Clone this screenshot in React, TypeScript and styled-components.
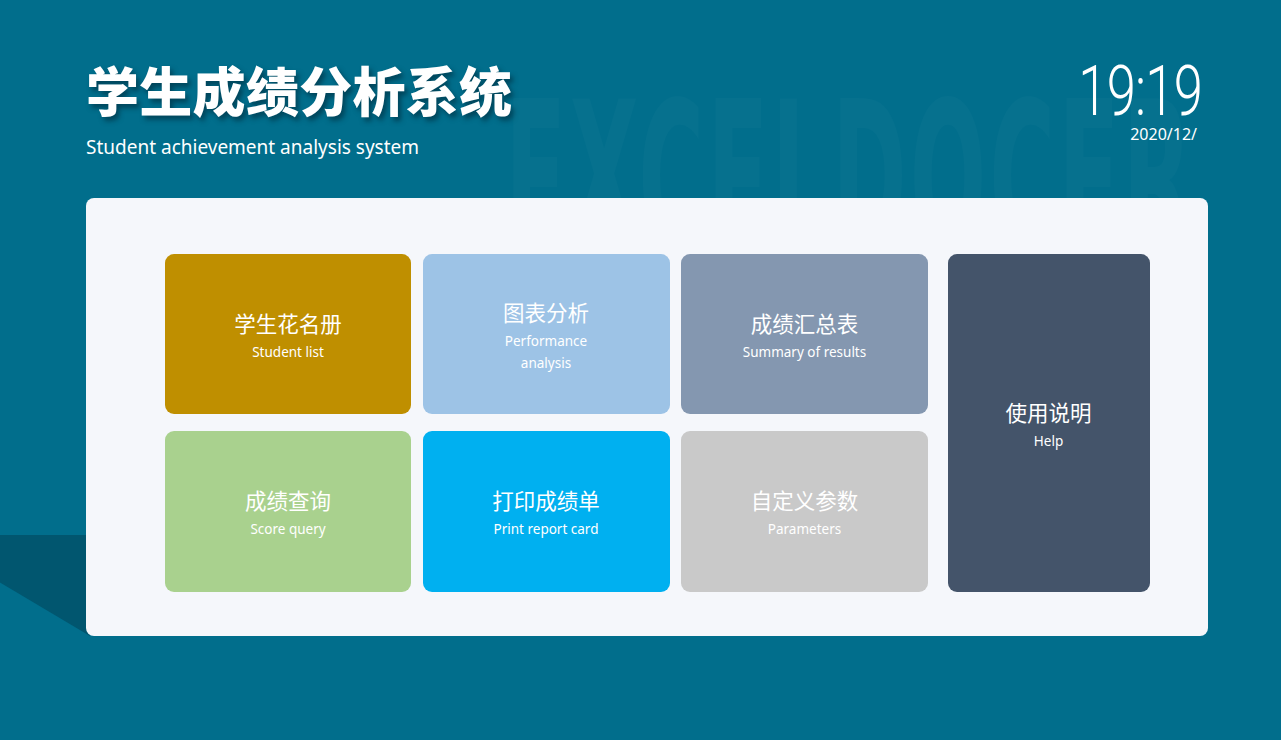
import React from "react";
import styled, { createGlobalStyle } from "styled-components";

const Global = createGlobalStyle`
  html, body { margin: 0; padding: 0; }
  body {
    background: #016e8c;
    width: 1281px;
    height: 740px;
    overflow: hidden;
    font-family: "Noto Sans", "Noto Sans CJK SC", sans-serif;
  }
`;

const Page = styled.div`
  position: relative;
  width: 1281px;
  height: 740px;
  padding: 0 81px 0 86px;
  box-sizing: border-box;
  overflow: hidden;
`;

const Watermark = styled.div`
  position: absolute;
  left: 505px;
  top: 76px;
  font-family: "DejaVu Sans", sans-serif;
  font-stretch: condensed;
  font-weight: 700;
  font-size: 100px;
  line-height: 1;
  letter-spacing: 3px;
  color: rgba(255, 255, 255, 0.022);
  transform: scale(1, 2.1);
  transform-origin: top left;
  white-space: nowrap;
  pointer-events: none;
`;

const PanelShadow = styled.div`
  position: absolute;
  left: 0;
  top: 535px;
  width: 90px;
  height: 101px;
  background: #01566f;
  clip-path: polygon(0 0, 100% 0, 100% 100%, 0 47%);
`;

const Header = styled.header`
  position: relative;
  display: flex;
  justify-content: space-between;
  align-items: flex-start;
  height: 198px;
`;

const TitleBlock = styled.div`
  padding-top: 55px;
`;

const Title = styled.h1`
  margin: 0;
  font-family: "Noto Sans CJK SC", sans-serif;
  font-weight: 900;
  font-size: 53px;
  line-height: 68px;
  color: #ffffff;
  letter-spacing: 0.3px;
  text-shadow: 3px 4px 5px rgba(0, 35, 50, 0.55);
`;

const Subtitle = styled.div`
  margin-top: 12px;
  font-family: "Noto Sans", sans-serif;
  font-size: 19px;
  line-height: 24px;
  color: #ffffff;
`;

const Clock = styled.div`
  padding-top: 54px;
  display: flex;
  flex-direction: column;
  align-items: flex-end;
  color: #ffffff;
`;

const Time = styled.div`
  font-family: "Roboto", sans-serif;
  font-weight: 300;
  font-size: 70px;
  line-height: 74px;
  letter-spacing: -1px;
  transform: scaleX(0.75);
  transform-origin: right center;
  margin-right: -2px;
`;

const DateText = styled.div`
  margin-top: -4px;
  margin-right: 3px;
  font-family: "Noto Sans", sans-serif;
  font-size: 16px;
  line-height: 20px;
`;

const Panel = styled.main`
  position: relative;
  width: 1122px;
  height: 438px;
  box-sizing: border-box;
  background: #f5f7fb;
  border-radius: 8px;
  padding: 56px 58px 44px 79px;
  display: grid;
  grid-template-columns: 246px 247px 247px 210px;
  grid-template-rows: 160px 161px;
  column-gap: 11.5px;
  row-gap: 17px;
`;

const Card = styled.div<{ $bg: string; $tall?: boolean }>`
  background: ${(p) => p.$bg};
  border-radius: 9px;
  display: flex;
  flex-direction: column;
  align-items: center;
  justify-content: center;
  padding-top: 3px;
  box-sizing: border-box;
  color: #ffffff;
  text-align: center;
  ${(p) => (p.$tall ? "grid-column: 4; grid-row: 1 / span 2; margin-left: 8px;" : "")}
`;

const CardTitle = styled.div`
  font-family: "Noto Sans CJK SC", sans-serif;
  font-weight: 400;
  font-size: 21.5px;
  line-height: 28px;
`;

const CardSub = styled.div<{ $maxW?: number }>`
  font-family: "Noto Sans", sans-serif;
  font-size: 13.5px;
  line-height: 22px;
  margin-top: 4px;
  max-width: ${(p) => (p.$maxW ? `${p.$maxW}px` : "none")};
`;

type Item = { zh: string; en: string; bg: string; tall?: boolean; maxW?: number };

const items: Item[] = [
  { zh: "学生花名册", en: "Student list", bg: "#bf8f00" },
  { zh: "图表分析", en: "Performance analysis", bg: "#9dc3e6", maxW: 100 },
  { zh: "成绩汇总表", en: "Summary of results", bg: "#8497b0" },
  { zh: "使用说明", en: "Help", bg: "#44546a", tall: true },
  { zh: "成绩查询", en: "Score query", bg: "#a9d18e" },
  { zh: "打印成绩单", en: "Print report card", bg: "#00b0f0" },
  { zh: "自定义参数", en: "Parameters", bg: "#c9c9c9" },
];

export default function App() {
  return (
    <Page>
      <Global />
      <Watermark>EXCELDOCER</Watermark>
      <PanelShadow />
      <Header>
        <TitleBlock>
          <Title>学生成绩分析系统</Title>
          <Subtitle>Student achievement analysis system</Subtitle>
        </TitleBlock>
        <Clock>
          <Time>19:19</Time>
          <DateText>2020/12/</DateText>
        </Clock>
      </Header>
      <Panel>
        {items.map((it) => (
          <Card key={it.zh} $bg={it.bg} $tall={it.tall}>
            <CardTitle>{it.zh}</CardTitle>
            <CardSub $maxW={it.maxW}>{it.en}</CardSub>
          </Card>
        ))}
      </Panel>
    </Page>
  );
}
